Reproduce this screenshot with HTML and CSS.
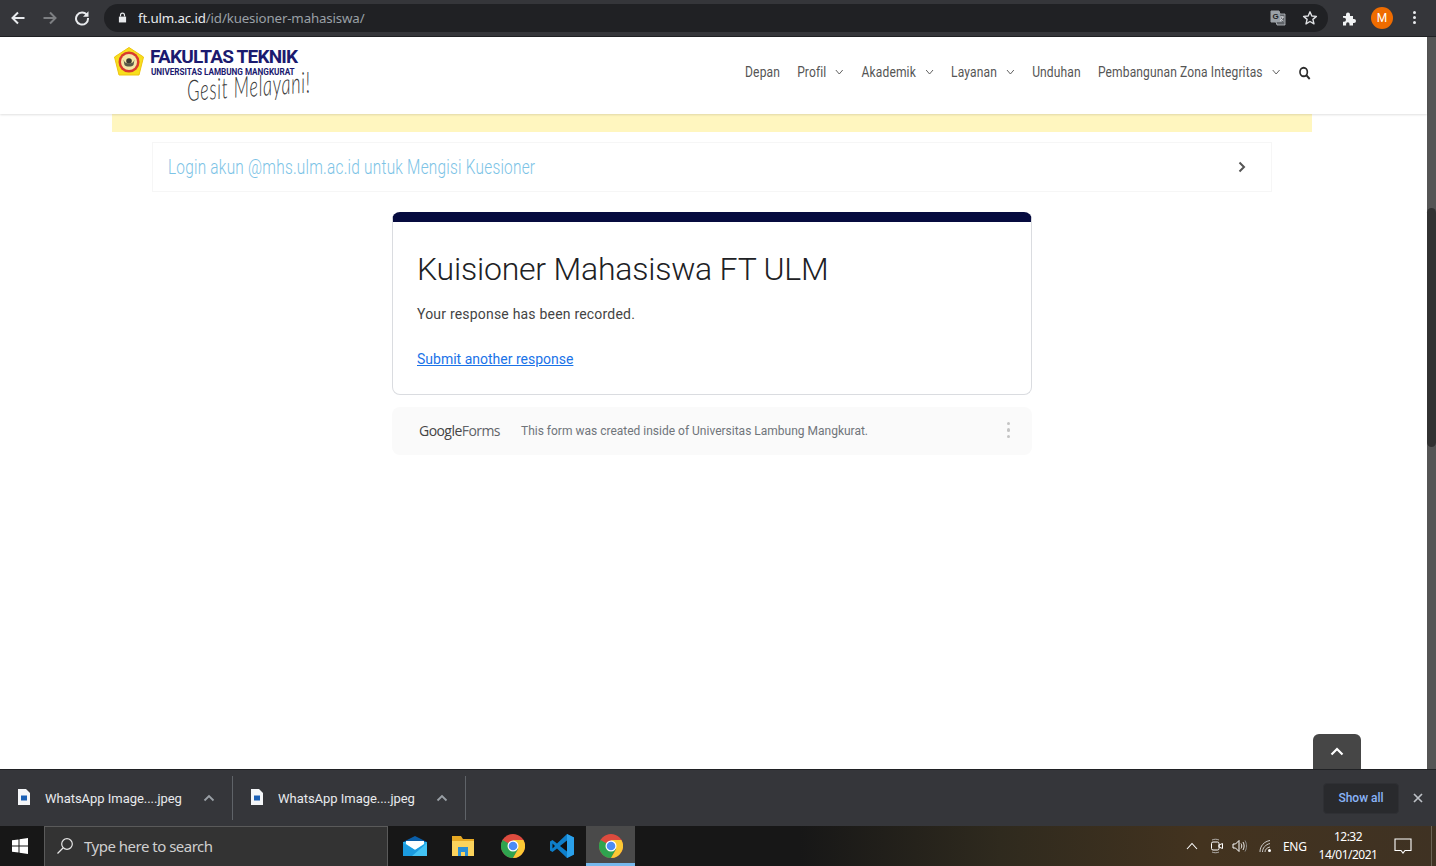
FILE: index.html
```html
<!DOCTYPE html>
<html lang="id">
<head>
<meta charset="utf-8">
<title>Kuisioner Mahasiswa</title>
<link rel="stylesheet" href="styles.css">
</head>
<body>
<div class="screen">
  <div class="chrome">
    <svg class="nav-ic" viewBox="0 0 16 16"><path d="M14.5 8H2.5M8 2.5 2.5 8 8 13.5" fill="none" stroke="#e8eaed" stroke-width="2"/></svg>
    <svg class="nav-ic" viewBox="0 0 16 16"><path d="M1.5 8h12M8 2.5 13.5 8 8 13.5" fill="none" stroke="#7d7f82" stroke-width="2"/></svg>
    <svg class="nav-ic" viewBox="0 0 16 16"><path d="M13 5.2A6 6 0 1 0 14 8" fill="none" stroke="#e8eaed" stroke-width="2"/><path d="M14.5 1.2v5.6H9z" fill="#e8eaed"/></svg>
    <div class="omnibox">
      <svg class="lock" viewBox="0 0 10 12"><path d="M1 5h8v6.5H1z" fill="#e8eaed"/><path d="M2.8 5V3.4a2.2 2.2 0 0 1 4.400 0V5" fill="none" stroke="#e8eaed" stroke-width="1.300"/></svg>
      <span class="url"><b>ft.ulm.ac.id</b>/id/kuesioner-mahasiswa/</span>
      <svg class="translate" viewBox="0 0 16 16"><path d="M1 1h8l1 3h5v11H7l-1-3H1z" fill="#5f6368" stroke="#bdc1c6" stroke-width="0.800"/><path d="M1 1h8l3 11H1z" fill="#9aa0a6"/><text x="2.500" y="9" class="tr-g">G</text><path d="M10 7h4M12 6v1M13 7c-.5 2-2 3.500-3 4M10.500 8.500c.8 1.300 2 2.200 3 2.500" fill="none" stroke="#e8eaed" stroke-width="0.800"/></svg>
      <svg class="star" viewBox="0 0 16 16"><path d="m8 1.800 1.800 4.200 4.600.4-3.500 3 1.100 4.500L8 11.500l-4 2.400 1.100-4.500-3.500-3 4.600-.4z" fill="none" stroke="#dfe1e4" stroke-width="1.400" stroke-linejoin="round"/></svg>
    </div>
    <svg class="puzzle" viewBox="0 0 16 16"><path d="M1 6h3V4.500a2 2 0 0 1 4 0V6h3v3h1a2 2 0 0 1 0 4h-1v2.500H7.500V14a1.700 1.700 0 0 0-3.400 0v1.500H1v-3.700h1a2 2 0 0 0 0-4H1z" fill="#f1f3f4"/></svg>
    <span class="avatar">M</span>
    <span class="kebab"><i></i><i></i><i></i></span>
  </div>

  <div class="viewport">
    <div class="page">
      <header class="site-head">
        <div class="logo">
          <svg class="crest" viewBox="0 0 32 32"><path d="M16 1.500 30.500 11 26 29 6 29 1.500 11z" fill="#f7df1e" stroke="#efc50f" stroke-linejoin="round"/><circle cx="16" cy="16" r="10.500" fill="#d83a2e"/><circle cx="16" cy="16" r="8" fill="#f4e7a6"/><circle cx="16" cy="15" r="2.800" fill="#3b3a30"/><path d="M10.500 13.500c1 3 3 4 5.500 4s4.500-1 5.500-4l-1 5.500c-1 1-2.500 1.500-4.500 1.500s-3.500-.5-4.500-1.500z" fill="#5a5a48"/></svg>
          <div class="logo-type">
            <div class="logo-title">FAKULTAS TEKNIK</div>
            <div class="logo-sub">UNIVERSITAS LAMBUNG MANGKURAT</div>
            <div class="logo-motto">Gesit Melayani!</div>
          </div>
        </div>
        <nav class="menu">
          <a>Depan</a>
          <a class="drop">Profil <svg viewBox="0 0 10 6"><path d="m1 1 4 4 4-4" fill="none" stroke="#555" stroke-width="1"/></svg></a>
          <a class="drop">Akademik <svg viewBox="0 0 10 6"><path d="m1 1 4 4 4-4" fill="none" stroke="#555" stroke-width="1"/></svg></a>
          <a class="drop">Layanan <svg viewBox="0 0 10 6"><path d="m1 1 4 4 4-4" fill="none" stroke="#555" stroke-width="1"/></svg></a>
          <a>Unduhan</a>
          <a class="drop">Pembangunan Zona Integritas <svg viewBox="0 0 10 6"><path d="m1 1 4 4 4-4" fill="none" stroke="#555" stroke-width="1"/></svg></a>
          <svg class="search" viewBox="0 0 14 14"><circle cx="6" cy="6" r="4.300" fill="none" stroke="#2b2b2b" stroke-width="1.900"/><path d="m9.200 9.200 3.800 3.800" stroke="#2b2b2b" stroke-width="2.200"/></svg>
        </nav>
      </header>
      <main class="content">
        <div class="notice"></div>
        <div class="accordion">
          <span>Login akun @mhs.ulm.ac.id untuk Mengisi Kuesioner</span>
          <svg viewBox="0 0 8 12"><path d="m1.500 1.500 4.500 4.500-4.500 4.500" fill="none" stroke="#555" stroke-width="2"/></svg>
        </div>
        <section class="form-card">
          <h1>Kuisioner Mahasiswa FT ULM</h1>
          <p>Your response has been recorded.</p>
          <a class="another">Submit another response</a>
        </section>
        <div class="form-foot">
          <span class="gf"><b>Google</b>Forms</span>
          <span class="foot-note">This form was created inside of Universitas Lambung Mangkurat.</span>
          <span class="dots"><i></i><i></i><i></i></span>
        </div>
      </main>
    </div>
    <div class="scrollbar"><div class="thumb"></div></div>
    <div class="to-top"><svg viewBox="0 0 14 9"><path d="m1.500 7.500 5.500-5.500 5.500 5.500" fill="none" stroke="#fff" stroke-width="2.200"/></svg></div>
  </div>

  <div class="downloads">
    <div class="dl">
      <svg class="file" viewBox="0 0 12 16"><path d="M0 0h8l4 4v12H0z" fill="#f4f6f8"/><path d="M3 6.500h6v5H3z" fill="#1a5fb4"/></svg>
      <span>WhatsApp Image....jpeg</span>
      <svg class="caret" viewBox="0 0 12 8"><path d="m1.500 6.500 4.500-4.500 4.500 4.500" fill="none" stroke="#9aa0a6" stroke-width="1.800"/></svg>
    </div>
    <div class="dl">
      <svg class="file" viewBox="0 0 12 16"><path d="M0 0h8l4 4v12H0z" fill="#f4f6f8"/><path d="M3 6.500h6v5H3z" fill="#1a5fb4"/></svg>
      <span>WhatsApp Image....jpeg</span>
      <svg class="caret" viewBox="0 0 12 8"><path d="m1.500 6.500 4.500-4.500 4.500 4.500" fill="none" stroke="#9aa0a6" stroke-width="1.800"/></svg>
    </div>
    <div class="show-all">Show all</div>
    <svg class="close" viewBox="0 0 10 10"><path d="m1 1 8 8M9 1 1 9" stroke="#bdc1c6" stroke-width="1.700"/></svg>
  </div>

  <div class="taskbar">
    <svg class="win" viewBox="0 0 16 16"><path d="M0 2.300 6.500 1.400V7.500H0zM7.500 1.300 16 0V7.500H7.500zM0 8.500H6.500V14.600L0 13.700zM7.500 8.500H16V16L7.500 14.700z" fill="#fff"/></svg>
    <div class="task-search">
      <svg viewBox="0 0 18 18"><circle cx="11" cy="7" r="5.300" fill="none" stroke="#e6e6e6" stroke-width="1.200"/><path d="M7 11 1.500 16.500" stroke="#e6e6e6" stroke-width="1.200"/></svg>
      <span>Type here to search</span>
    </div>
    <div class="apps">
      <span class="app"><svg viewBox="0 0 24 20"><path d="M0 6 12 0l12 6v2H0z" fill="#0a5ea8"/><path d="M0 6h24v14H0z" fill="#29b2ec"/><path d="M3 5h18v3l-9 6-9-6z" fill="#fff"/><path d="M0 7l12 7 12-7v13H0z" fill="#1b9be0"/><path d="M24 7v13H9z" fill="#43c3f5"/></svg></span>
      <span class="app"><svg class="folder" viewBox="0 0 22 20"><path d="M0 0h9l2 3h11v17H0z" fill="#e6a823"/><path d="M0 5h22v15H0z" fill="#fbd35c"/><path d="M6 11h10v9h-3v-4H9v4H6z" fill="#2a8fd6"/></svg></span>
      <span class="app"><svg class="chrome-ic" viewBox="0 0 24 24"><use href="#chrome-logo"/></svg></span>
      <span class="app"><svg viewBox="0 0 24 24"><path d="M17 0 24 3.500V20.500L17 24 7 14.500 2.500 18 0 16.500V7.500L2.500 6 7 9.500z" fill="#0e7fcb"/><path d="M17 6.500 10 12l7 5.500z" fill="#111"/><path d="M2.500 9.500 5 12l-2.500 2.500z" fill="#111"/><path d="M17 0 24 3.500V20.500L17 24z" fill="#2aa0ea"/></svg></span>
      <span class="app active"><svg class="chrome-ic" viewBox="0 0 24 24"><use href="#chrome-logo"/></svg></span>
    </div>
    <div class="tray">
      <svg class="t-caret" viewBox="0 0 12 8"><path d="m1 7 5-5.500L11 7" fill="none" stroke="#fff" stroke-width="1.100"/></svg>
      <svg class="t-cam" viewBox="0 0 14 16"><rect x="1.500" y="4" width="7.500" height="8" rx="1.500" fill="none" stroke="#fff"/><path d="M9 7l3.500-1.500v5L9 9z" fill="none" stroke="#fff"/><path d="M2 2c2-1 5-1 7 0M2 14c2 1 5 1 7 0" fill="none" stroke="#ccc" stroke-width="0.800"/></svg>
      <svg class="t-vol" viewBox="0 0 16 14"><path d="M1 5h2.500L7 1.500v11L3.500 9H1z" fill="none" stroke="#fff"/><path d="M9 4.500c1 1.500 1 3.500 0 5M11 3c1.500 2.500 1.500 5.500 0 8" fill="none" stroke="#fff" stroke-width="0.900"/><path d="M13 1.500c2 3.500 2 7.500 0 11" fill="none" stroke="#999" stroke-width="0.900"/></svg>
      <svg class="t-wifi" viewBox="0 0 14 14"><path d="M1 13C1 7 5 2.500 11 1.500M3.500 13c0-4 3-7.500 7.500-8.500M6 13c0-2.500 2-4.500 5-5" fill="none" stroke="#ddd" stroke-width="0.900"/><circle cx="10.500" cy="11.500" r="1.500" fill="#fff"/></svg>
      <span class="lang">ENG</span>
      <span class="clock"><span>12:32</span><span>14/01/2021</span></span>
      <svg class="t-note" viewBox="0 0 18 16"><path d="M1 1h16v11.500h-6L9 15l-2-2.500H1z" fill="none" stroke="#fff" stroke-width="1.100"/></svg>
      <span class="t-edge"></span>
    </div>
  </div>
</div>
<svg class="defs" aria-hidden="true"><defs><g id="chrome-logo">
  <circle cx="12" cy="12" r="12" fill="#dd4b3e"/>
  <path d="M12 12 1.600 6A12 12 0 0 0 12 24l5.200-9z" fill="#2fa44f"/>
  <path d="M12 6h10.400A12 12 0 0 1 12 24l5.200-9z" fill="#fcc934"/>
  <circle cx="12" cy="12" r="5.500" fill="#fff"/><circle cx="12" cy="12" r="4.300" fill="#4c8bf5"/>
</g></defs></svg>
</body>
</html>
```
FILE: styles.css
```css
* { box-sizing: border-box; }
html, body { margin: 0; padding: 0; height: 100%; overflow: hidden; }
body { font-family: Roboto, "Liberation Sans", sans-serif; background: #fff; }
.defs { width: 0; height: 0; display: block; }
.screen { width: 1436px; height: 866px; display: flex; flex-direction: column; overflow: hidden; }

/* browser toolbar */
.chrome { height: 37px; flex: none; background: #35363a; border-bottom: 1px solid #202124; display: flex; align-items: center; padding: 0 0 1px 10px; }
.nav-ic { width: 16px; height: 16px; margin-right: 16px; flex: none; }
.omnibox { width: 1224px; height: 28px; margin-left: -2px; background: #202124; border-radius: 14px; display: flex; align-items: center; padding: 0 10px 0 14px; }
.lock { width: 9px; height: 11px; flex: none; }
.url { margin-left: 11px; font: 13.3px "Noto Sans", "Open Sans", sans-serif; color: #9aa0a6; letter-spacing: -0.15px; flex: 1; }
.url b { font-weight: 400; color: #e8eaed; }
.translate { width: 16px; height: 16px; flex: none; margin-right: 16px; margin-left: 1px; }
.tr-g { font: 700 8px "Liberation Sans", sans-serif; fill: #202124; }
.star { width: 16px; height: 16px; flex: none; }
.puzzle { width: 16px; height: 16px; margin-left: 14px; flex: none; }
.avatar { width: 22px; height: 22px; margin-left: 13px; border-radius: 50%; background: #ef6c00; color: #fff; font-size: 12px; display: flex; align-items: center; justify-content: center; flex: none; }
.kebab { margin-left: 20px; display: flex; flex-direction: column; gap: 2px; }
.kebab i { width: 3px; height: 3px; border-radius: 50%; background: #e8eaed; }

/* viewport */
.viewport { position: relative; flex: 1; display: flex; min-height: 0; }
.page { width: 1427px; flex: none; display: flex; flex-direction: column; }
.content { width: 1424px; display: flex; flex-direction: column; align-items: center; }
.scrollbar { width: 9px; flex: none; background: #555; padding-top: 171px; }
.thumb { height: 239px; background: #323232; border-radius: 5px; }
.to-top { position: absolute; left: 1313px; bottom: 0; width: 48px; height: 35px; background: #464646; border-radius: 6px 6px 0 0; display: flex; align-items: center; justify-content: center; }
.to-top svg { width: 14px; height: 9px; }

.site-head { width: 100%; height: 77px; flex: none; display: flex; justify-content: space-between; align-items: flex-start; padding: 0 116px 0 113px; box-shadow: 0 1px 2px rgba(0,0,0,.12); position: relative; z-index: 1; background: #fff; }
.logo { display: flex; gap: 5px; padding-top: 9px; }
.crest { width: 32px; height: 32px; flex: none; }
.logo-type { width: 170px; padding-top: 1px; }
.logo-title { font: 700 19px/20px Roboto, sans-serif; color: #1b1a6f; letter-spacing: -0.8px; white-space: nowrap; }
.logo-sub { font: 700 8.2px/9px Roboto, sans-serif; color: #1b1a6f; letter-spacing: -0.03px; white-space: nowrap; margin: 1px 0 0 1px; }
.logo-motto { width: 170px; font: italic 300 29px/28px Lato, sans-serif; color: #3a3a3a; letter-spacing: 1px; margin: -1px 0 0 38px; white-space: nowrap; transform: rotate(-4deg) scaleX(.63); transform-origin: left bottom; }
.menu { display: flex; align-items: center; gap: 20px; height: 70px; font-family: Roboto, sans-serif; font-size: 14px; letter-spacing: .14px; color: #555; transform: scaleX(.86); transform-origin: right center; white-space: nowrap; }
.menu a { display: flex; align-items: center; gap: 10px; }
.menu a svg { width: 11px; height: 6px; }
.search { width: 15px; height: 14px; flex: none; margin-top: 2px; }

.notice { width: 1200px; height: 18px; flex: none; background: #fff6bf; }
.accordion { width: 1120px; height: 50px; flex: none; margin-top: 10px; border: 1px solid #f6f6f6; display: flex; align-items: center; justify-content: space-between; padding: 0 25px 0 15px; }
.accordion span { font-size: 20px; font-weight: 300; letter-spacing: .3px; color: #7cc3e6; transform: scaleX(.77); transform-origin: left center; white-space: nowrap; }
.accordion svg { width: 8px; height: 12px; }

.form-card { width: 640px; height: 183px; flex: none; margin-top: 20px; background: #fff; border: 1px solid #dadce0; border-top: 10px solid #060b3f; border-radius: 8px; padding: 27px 24px 0; }
.form-card h1 { margin: 0; font: 300 32px/40px Roboto, sans-serif; color: #202124; letter-spacing: -0.22px; white-space: nowrap; }
.form-card p { margin: 15px 0 0; font-size: 14px; line-height: 20px; letter-spacing: .2px; color: #444; }
.another { display: inline-block; margin-top: 25px; font-size: 14px; line-height: 20px; color: #1a73e8; text-decoration: underline; }

.form-foot { width: 640px; height: 48px; flex: none; margin-top: 12px; background: #fafafa; border-radius: 8px; display: flex; align-items: center; padding: 0 22px 0 27px; }
.gf { font: 400 14px/14px "Open Sans", Roboto, sans-serif; color: #5f6368; letter-spacing: -0.55px; width: 102px; flex: none; }
.gf b { font-weight: 500; color: #444; }
.foot-note { flex: 1; font-size: 12px; color: #70757a; }
.dots { display: flex; flex-direction: column; gap: 3px; margin-top: -2px; }
.dots i { width: 3.500px; height: 3.500px; border-radius: 50%; background: #c4c4c4; }

/* download shelf */
.downloads { height: 57px; flex: none; background: #35363a; border-top: 1px solid #202124; display: flex; align-items: center; color: #e8eaed; }
.dl { width: 233px; height: 44px; border-right: 1px solid #5f6368; display: flex; align-items: center; padding: 0 17px 0 18px; font: 13px Roboto, "Noto Sans", sans-serif; }
.dl span { margin-left: 15px; flex: 1; letter-spacing: -0.03px; }
.file { width: 12px; height: 16px; margin-bottom: 3px; flex: none; }
.caret { width: 12px; height: 8px; flex: none; }
.show-all { margin-left: auto; width: 76px; height: 31px; background: #292a2d; border: 1px solid #2f3034; border-radius: 4px; color: #8ab4f8; font: 500 12px/29px Roboto, sans-serif; text-align: center; }
.close { width: 10px; height: 10px; margin: 0 13px 0 14px; flex: none; }

/* windows taskbar */
.taskbar { height: 40px; flex: none; display: flex; align-items: stretch; background: linear-gradient(90deg, #171717 0, #171717 800px, #2f2a1e 1000px, #43331f 1200px, #3f3223 1436px); color: #fff; }
.win { width: 16px; height: 16px; margin: 12px 16px 0 12px; flex: none; }
.task-search { width: 344px; background: #333; border: 1px solid #5a5a5a; border-bottom: 0; display: flex; align-items: center; padding: 0 0 2px 11px; gap: 10px; font: 15px "Noto Sans", "Open Sans", sans-serif; color: #cfcfcf; flex: none; }
.task-search span { letter-spacing: -0.5px; }
.task-search svg { width: 18px; height: 18px; flex: none; }
.apps { display: flex; margin-left: 2px; }
.app { width: 49px; display: flex; align-items: center; justify-content: center; }
.app svg { width: 24px; height: 24px; }
.app .folder { width: 22px; height: 20px; margin-right: 2px; }
.app.active { background: #4a4a4a; border-bottom: 3px solid #76b9ed; padding-top: 3px; }
.tray { margin-left: auto; display: flex; align-items: center; font: 12px "Noto Sans", "Open Sans", sans-serif; }
.t-caret { width: 12px; height: 8px; margin-right: 12px; }
.t-cam { width: 14px; height: 16px; margin-right: 8px; }
.t-vol { width: 16px; height: 14px; margin-right: 11px; }
.t-wifi { width: 14px; height: 14px; margin-right: 10px; }
.lang { width: 24px; letter-spacing: -0.3px; }
.clock { width: 72px; margin-left: 5px; display: flex; flex-direction: column; align-items: center; line-height: 18px; letter-spacing: -0.5px; }
.t-note { width: 18px; height: 16px; margin: 0 19px 0 10px; }
.t-edge { width: 1px; height: 40px; background: #6b6355; margin-right: 4px; }
```
